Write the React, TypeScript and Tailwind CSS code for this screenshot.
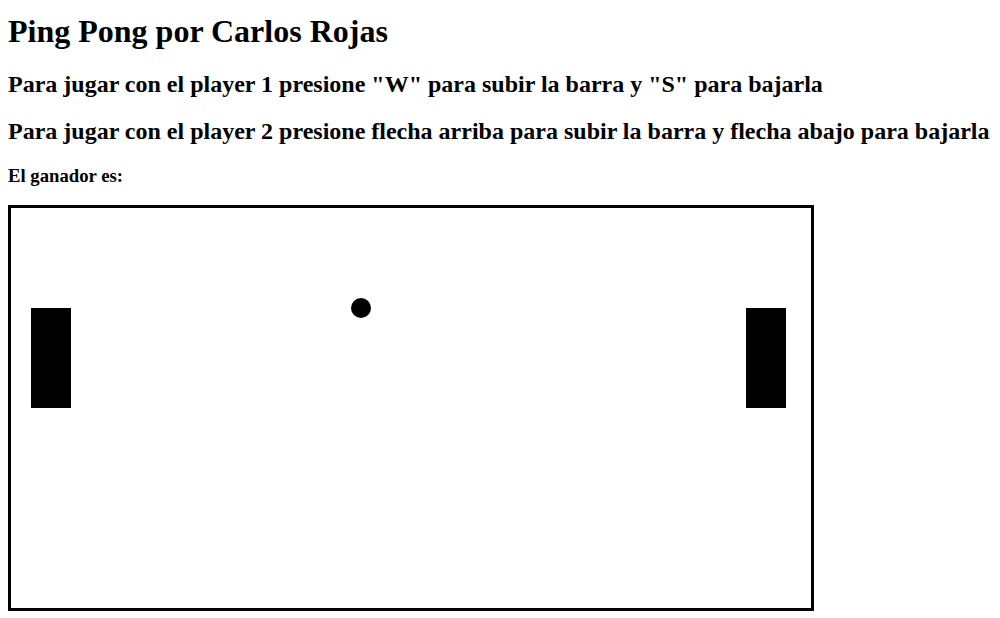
export default function App() {
  return (
    <div className="min-h-screen bg-white px-2 pt-[13px] font-['Liberation_Serif',serif] text-black">
      <h1 className="mb-[21.44px] text-[32px] font-bold leading-[normal]">
        Ping Pong por Carlos Rojas
      </h1>
      <h2 className="mb-[19.92px] text-[24px] font-bold leading-[normal]">
        Para jugar con el player 1 presione "W" para subir la barra y "S" para bajarla
      </h2>
      <h2 className="mb-[19.92px] text-[24px] font-bold leading-[normal]">
        Para jugar con el player 2 presione flecha arriba para subir la barra y flecha abajo para bajarla
      </h2>
      <h3 className="mb-[17.72px] text-[18.72px] font-bold leading-[normal]">
        El ganador es:
      </h3>
      {/* tablero del juego */}
      <div className="h-[406px] w-[806px] border-[3px] border-black">
        <svg width="800" height="400" viewBox="0 0 800 400" className="block">
          <rect x="20" y="100" width="40" height="100" fill="#000" />
          <rect x="735" y="100" width="40" height="100" fill="#000" />
          <circle cx="350" cy="100" r="10" fill="#000" />
        </svg>
      </div>
    </div>
  );
}
